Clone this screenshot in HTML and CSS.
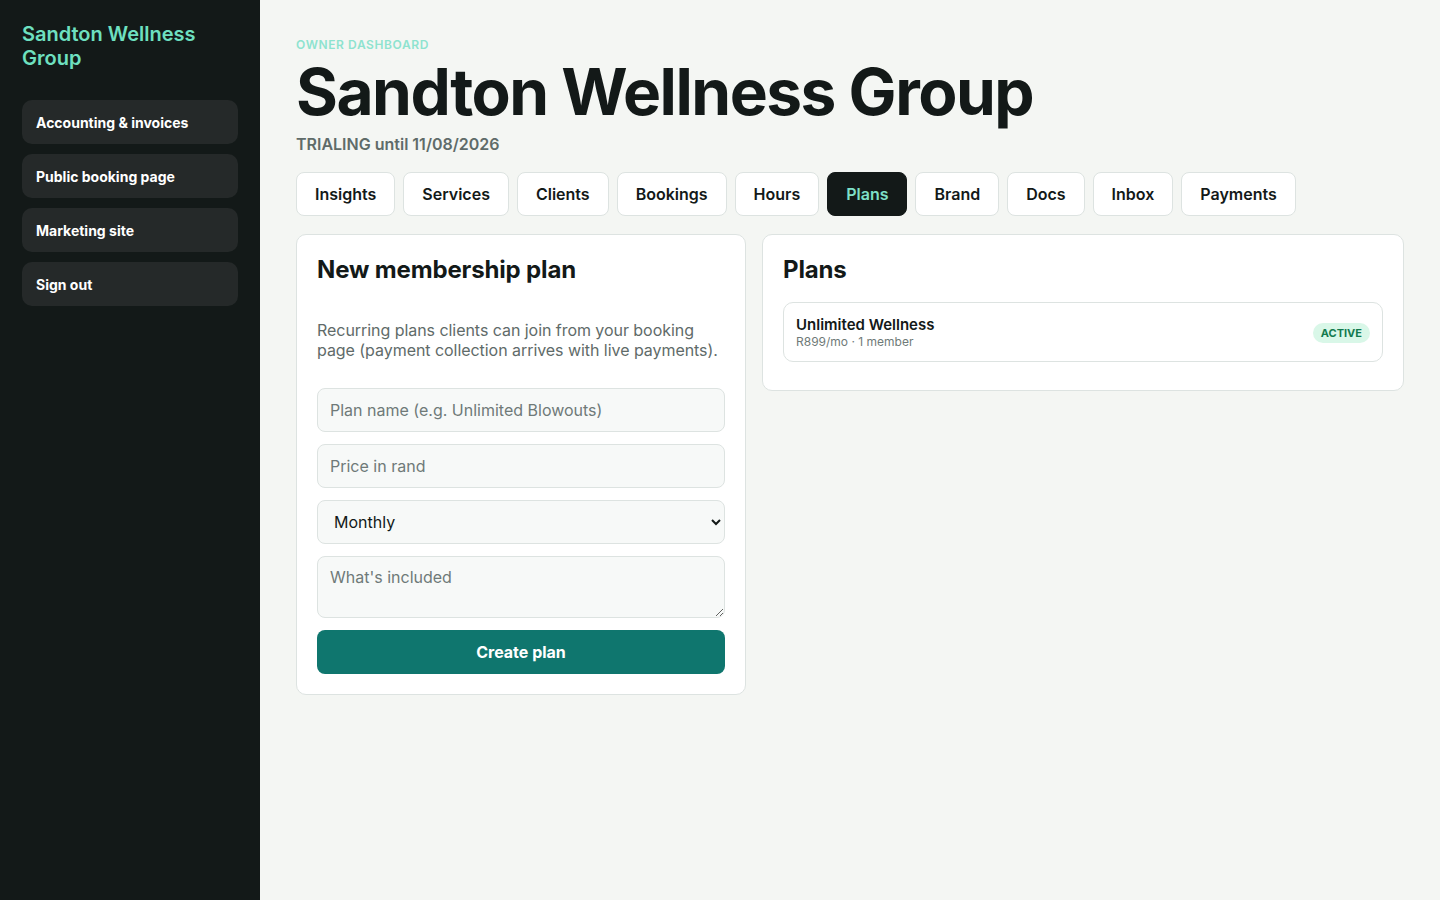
FILE: index.html
```html
<!DOCTYPE html>
<html lang="en">
<head>
    <meta charset="UTF-8">
    <meta name="viewport" content="width=device-width, initial-scale=1.0">
    <title>Sandton Wellness Group · Plans</title>
    <link rel="stylesheet" href="styles.css">
</head>
<body>
    <aside class="sidebar">
        <div class="brand">Sandton Wellness Group</div>
        <nav class="side-nav">
            <a href="#">Accounting &amp; invoices</a>
            <a href="#">Public booking page</a>
            <a href="#">Marketing site</a>
            <a href="#">Sign out</a>
        </nav>
    </aside>

    <main class="main">
        <div class="eyebrow">Owner dashboard</div>
        <h1>Sandton Wellness Group</h1>
        <div class="status">TRIALING until 11/08/2026</div>

        <div class="tabs">
            <button>Insights</button>
            <button>Services</button>
            <button>Clients</button>
            <button>Bookings</button>
            <button>Hours</button>
            <button class="active">Plans</button>
            <button>Brand</button>
            <button>Docs</button>
            <button>Inbox</button>
            <button>Payments</button>
        </div>

        <div class="panels">
            <section class="card">
                <h2>New membership plan</h2>
                <p class="hint">Recurring plans clients can join from your booking page (payment collection arrives with live payments).</p>
                <form class="plan-form" onsubmit="return false">
                    <input type="text" placeholder="Plan name (e.g. Unlimited Blowouts)">
                    <input type="text" placeholder="Price in rand">
                    <select>
                        <option>Monthly</option>
                        <option>Weekly</option>
                        <option>Yearly</option>
                    </select>
                    <textarea placeholder="What's included"></textarea>
                    <button class="primary">Create plan</button>
                </form>
            </section>

            <section class="card plans-card">
                <h2>Plans</h2>
                <div class="plan-row">
                    <div>
                        <div class="plan-name">Unlimited Wellness</div>
                        <div class="plan-meta">R899/mo · 1 member</div>
                    </div>
                    <span class="badge">ACTIVE</span>
                </div>
            </section>
        </div>
    </main>
</body>
</html>
```

FILE: styles.css
```css
body {
    margin: 0;
    display: flex;
    min-height: 100vh;
    background: #f4f6f3;
    font-family: Inter, "Noto Sans", sans-serif;
    color: #131918;
}

.sidebar {
    width: 260px;
    flex-shrink: 0;
    background: #131918;
    padding: 22px 22px;
    box-sizing: border-box;
}

.brand {
    color: #6ee0c0;
    font-size: 20px;
    font-weight: 600;
    line-height: 24px;
    margin-bottom: 30px;
}

.side-nav {
    display: flex;
    flex-direction: column;
    gap: 10px;
}

.side-nav a {
    display: block;
    height: 44px;
    line-height: 46px;
    padding: 0 14px;
    background: #252929;
    border-radius: 10px;
    color: #fff;
    font-size: 14px;
    font-weight: 700;
    text-decoration: none;
}

.main {
    flex: 1;
    padding: 36px 36px;
}

.eyebrow {
    color: #8ee3cf;
    font-size: 12px;
    font-weight: 600;
    letter-spacing: 0.6px;
    text-transform: uppercase;
    line-height: 18px;
}

h1 {
    margin: 2px 0 0;
    font-size: 64px;
    font-weight: 700;
    line-height: 72px;
    letter-spacing: -1.5px;
}

.status {
    color: #5f6b69;
    font-size: 16px;
    font-weight: 600;
    margin-top: 4px;
    line-height: 24px;
}

.tabs {
    display: flex;
    gap: 8px;
    margin-top: 16px;
}

.tabs button {
    height: 44px;
    padding: 0 18px;
    background: #fff;
    border: 1px solid #dde3e1;
    border-radius: 8px;
    font-family: inherit;
    font-size: 16px;
    font-weight: 600;
    color: #131918;
    cursor: pointer;
}

.tabs button.active {
    background: #131918;
    border-color: #131918;
    color: #7ee0c8;
}

.panels {
    display: grid;
    grid-template-columns: 450px 1fr;
    gap: 16px;
    align-items: start;
    margin-top: 18px;
}

.card {
    background: #fff;
    border: 1px solid #dde3e1;
    border-radius: 10px;
    padding: 20px;
}

h2 {
    margin: 0;
    font-size: 24px;
    font-weight: 700;
    line-height: 30px;
    letter-spacing: -0.15px;
}

.hint {
    margin: 35px 0 28px;
    color: #5f6b69;
    font-size: 16px;
    line-height: 20px;
    letter-spacing: -0.05px;
}

.plan-form {
    display: flex;
    flex-direction: column;
    gap: 12px;
}

.plan-form input,
.plan-form select,
.plan-form textarea {
    font-family: inherit;
    font-size: 16px;
    color: #131918;
    background: #f7f9f8;
    border: 1px solid #dde3e1;
    border-radius: 8px;
    padding: 0 12px;
    box-sizing: border-box;
    width: 100%;
}

.plan-form input,
.plan-form select {
    height: 44px;
}

.plan-form input::placeholder,
.plan-form textarea::placeholder {
    color: #6f7a78;
}

.plan-form textarea {
    height: 62px;
    padding: 10px 12px;
    resize: vertical;
}

.primary {
    height: 44px;
    background: #0f766e;
    color: #fff;
    border: none;
    border-radius: 8px;
    font-family: inherit;
    font-size: 16px;
    font-weight: 700;
    cursor: pointer;
}

.plans-card {
    padding-bottom: 28px;
}

.plan-row {
    margin-top: 17px;
    display: flex;
    justify-content: space-between;
    align-items: center;
    border: 1px solid #dde3e1;
    border-radius: 10px;
    padding: 2px 12px 0;
    height: 60px;
    box-sizing: border-box;
}

.plan-name {
    font-size: 15px;
    font-weight: 600;
    line-height: 18px;
}

.plan-meta {
    font-size: 12px;
    color: #6f7a78;
    line-height: 16px;
}

.badge {
    background: #d9f7e8;
    color: #137a4e;
    font-size: 11px;
    font-weight: 700;
    padding: 3px 8px;
    border-radius: 999px;
}
```
